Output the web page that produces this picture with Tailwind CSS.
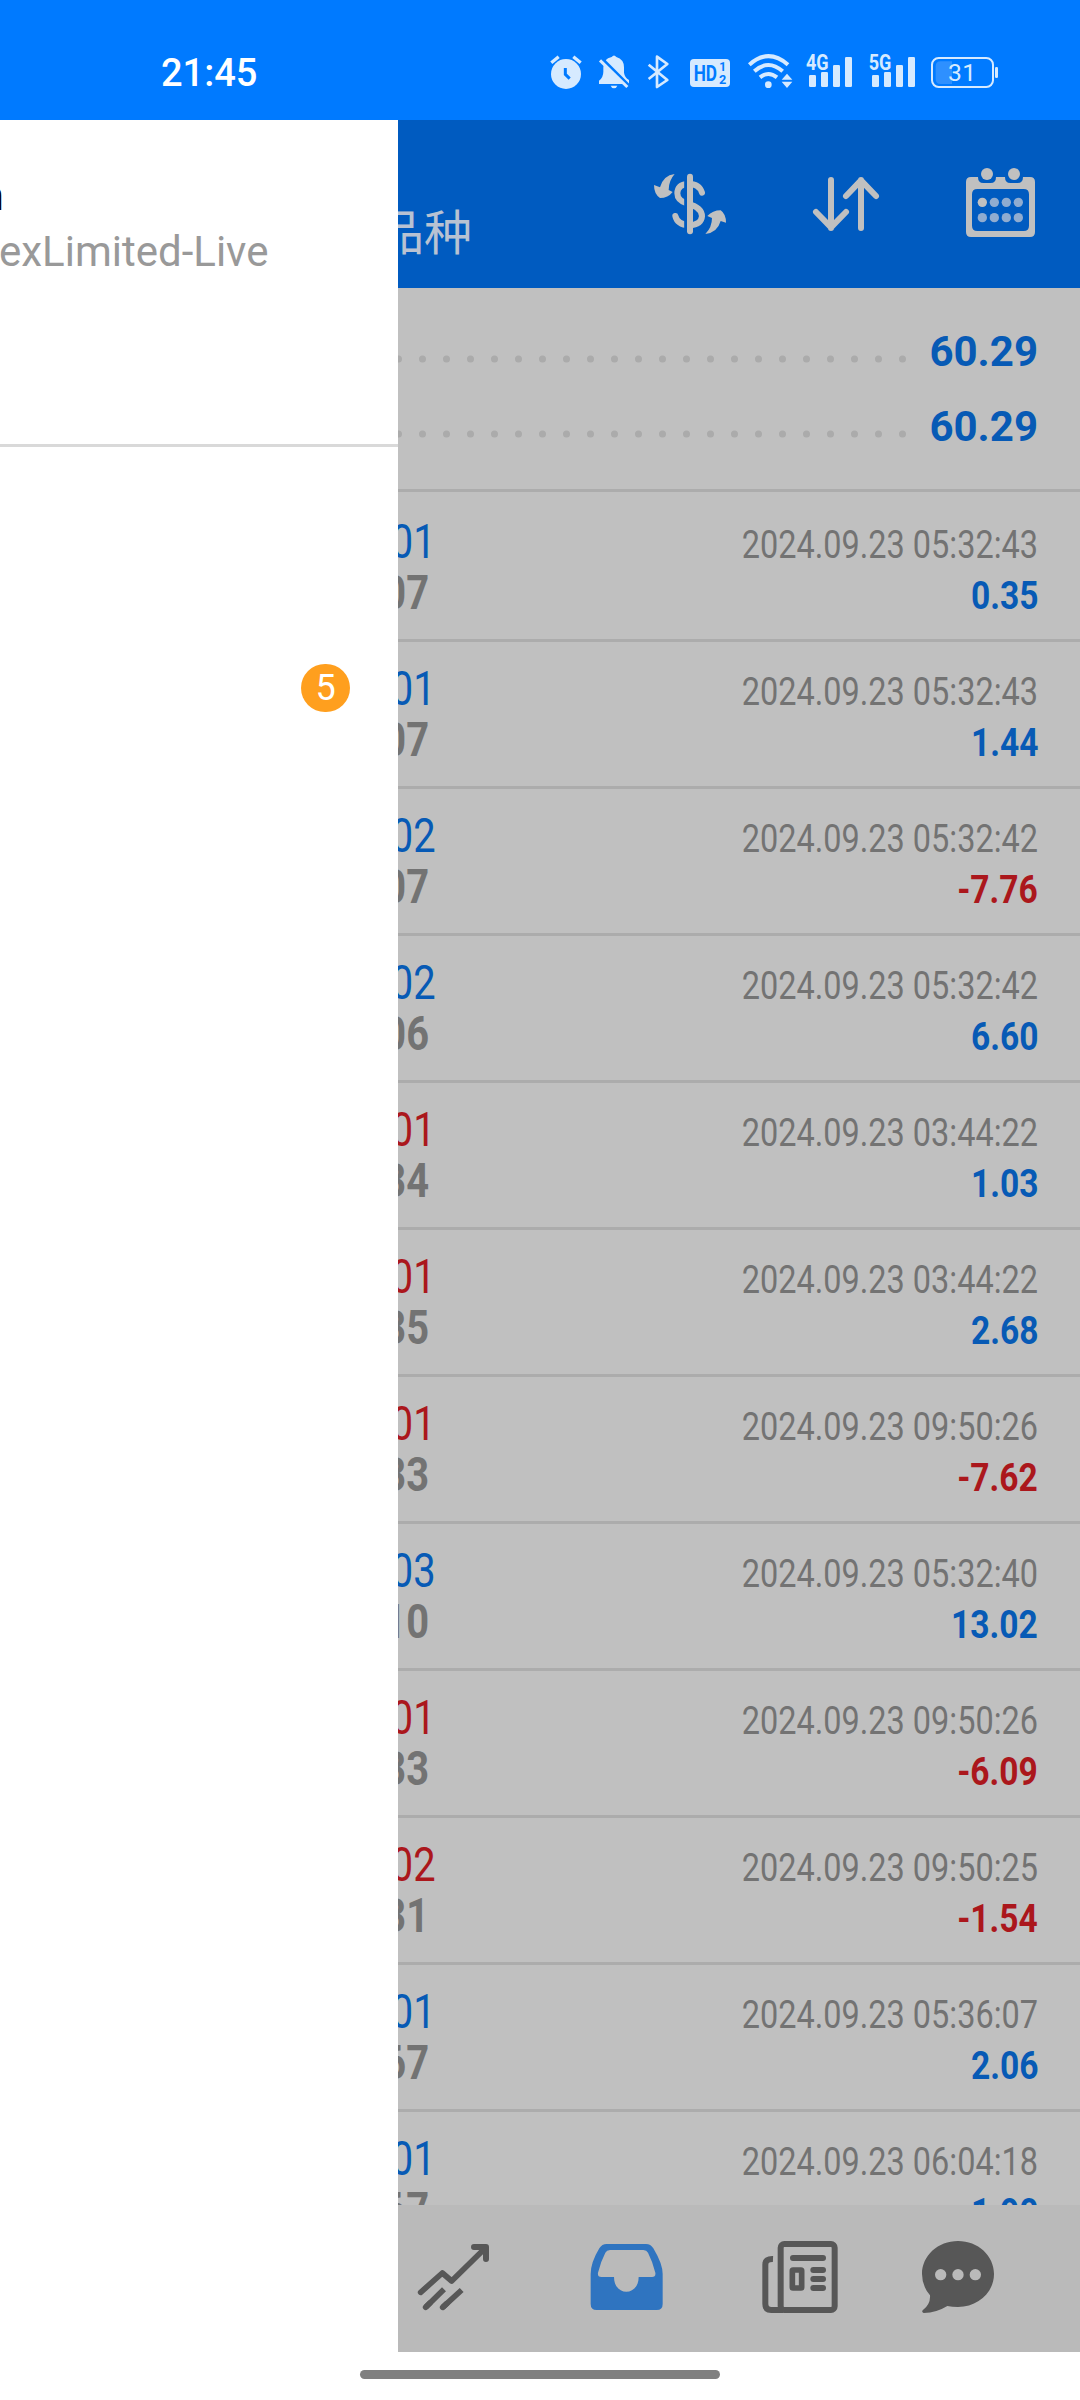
<!DOCTYPE html>
<html lang="zh">
<head>
    <meta charset="UTF-8">
    <meta name="viewport" content="width=device-width, initial-scale=1.0">
    <title>History</title>
    <script src="https://cdn.jsdelivr.net/npm/@tailwindcss/browser@4"></script>
</head>
<body class="w-[1080px] h-[2400px] overflow-hidden bg-white font-[Roboto,'Noto_Sans_CJK_SC',sans-serif]">

    <!-- Status bar -->
    <div class="h-[120px] bg-[#007aff] flex items-start pl-[161px] pr-[80px] text-white">
        <span class="mt-[48px] text-[38px] leading-[50px] font-medium">21:45</span>
        <div class="ml-auto mt-[50px] flex text-[#d6eaff]">
            <svg class="w-8 h-[45px]" viewBox="30 60 96 135" fill="currentColor">
                <circle cx="78" cy="132" r="45"/>
                <path d="M34 98 L56 80 M122 98 L100 80" stroke="currentColor" stroke-width="10"/>
                <path d="M76 114 V133 L89 146" fill="none" stroke="#007aff" stroke-width="9"/>
            </svg>
            <svg class="ml-4 w-8 h-[45px]" viewBox="174 60 96 135" fill="currentColor">
                <path d="M177 162 V152 Q190 142 190 125 V112 Q190 86 215 81 Q222 72 229 81 Q252 88 252 112 V128 Q254 142 267 150 V162 Z"/>
                <path d="M212 167 H232 Q229 175 222 175 Q215 175 212 167 Z"/>
                <path d="M185 85 L268 168" stroke="#007aff" stroke-width="9"/>
                <path d="M180 91 L262 171" stroke="currentColor" stroke-width="9"/>
            </svg>
            <svg class="ml-4 w-6 h-[45px]" viewBox="318 60 72 135" fill="none" stroke="currentColor" stroke-width="8" stroke-linejoin="round">
                <path d="M326 104 L382 150 L351 171 V80 L382 102 L326 147"/>
            </svg>
            <svg class="ml-[19px] w-[42px] h-[45px]" viewBox="447 60 126 135">
                <rect x="450" y="87" width="120" height="84" rx="12" fill="currentColor"/>
                <text x="461" y="152" font-family="Roboto" font-size="66" font-weight="700" textLength="70" lengthAdjust="spacingAndGlyphs" fill="#007aff">HD</text>
                <text x="538" y="124" font-family="Roboto" font-size="36" font-weight="700" fill="#007aff">1</text>
                <text x="537" y="161" font-family="Roboto" font-size="38" font-weight="700" fill="#007aff">2</text>
            </svg>
            <svg class="ml-4 w-[46px] h-[45px]" viewBox="621 60 138 135" fill="none" stroke="currentColor" stroke-width="12">
                <path d="M628 104 Q685 53 744 104"/>
                <path d="M643 124 Q685 86 728 124"/>
                <path d="M660 142 Q685 122 711 142"/>
                <circle cx="685" cy="164" r="10" fill="currentColor" stroke="none"/>
                <path d="M725 149 L741 131 L757 149 Z M725 155 L741 174 L757 155 Z" fill="currentColor" stroke="none"/>
            </svg>
            <svg class="ml-3 w-12 h-[45px]" viewBox="75 60 144 135" fill="currentColor">
                <text x="78" y="121" font-family="Roboto" font-size="64" font-weight="700" textLength="68" lengthAdjust="spacingAndGlyphs">4G</text>
                <rect x="87" y="135" width="21" height="36" rx="4"/>
                <rect x="123" y="126" width="21" height="45" rx="4"/>
                <rect x="159" y="105" width="21" height="66" rx="4"/>
                <rect x="195" y="81" width="21" height="90" rx="4"/>
            </svg>
            <svg class="ml-[15px] w-12 h-[45px]" viewBox="264 60 144 135" fill="currentColor">
                <text x="266" y="121" font-family="Roboto" font-size="64" font-weight="700" textLength="68" lengthAdjust="spacingAndGlyphs">5G</text>
                <rect x="276" y="135" width="21" height="36" rx="4"/>
                <rect x="312" y="126" width="21" height="45" rx="4"/>
                <rect x="348" y="105" width="21" height="66" rx="4"/>
                <rect x="384" y="81" width="21" height="90" rx="4"/>
            </svg>
            <svg class="ml-[14px] w-[70px] h-[45px]" viewBox="450 60 210 135" fill="currentColor">
                <rect x="456" y="84" width="183" height="87" rx="20" fill="none" stroke="currentColor" stroke-width="6"/>
                <path d="M482 94 H516 V162 H482 Q467 162 467 147 V109 Q467 94 482 94 Z" fill="#2e90ff"/>
                <rect x="645" y="111" width="9" height="33" rx="4"/>
                <text x="504" y="154" font-family="Roboto" font-size="74" textLength="84">31</text>
            </svg>
        </div>
    </div>

    <div class="flex h-[2232px]">
        <!-- Drawer -->
        <aside class="w-[398px] shrink-0 bg-white overflow-hidden">
            <div class="h-[327px] border-b-[3px] border-[#d9d9d9] pt-[50px]">
                <div class="flex justify-end w-[4px] text-[42px] leading-[52px] text-black">n</div>
                <div class="-ml-px mt-1 text-[42px] leading-[52px] text-[#999] whitespace-nowrap">exLimited-Live</div>
            </div>
            <div class="flex justify-end pr-[48px] pt-[217px]">
                <span class="w-[49px] h-12 rounded-full bg-[#ff9f1e] text-white text-[36px] leading-[48px] text-center">5</span>
            </div>
        </aside>

        <!-- Dimmed page -->
        <main class="w-[682px] flex flex-col bg-[#c0c0c0] overflow-hidden">
            <header class="h-[168px] shrink-0 bg-[#005bc0] flex items-start pr-[38px] text-[#c0c0c0]">
                <div class="w-[74px] mt-[75px] flex justify-end text-[48px] leading-[68px] font-normal text-[#b8c2d2] whitespace-nowrap font-['Noto_Sans_CJK_SC',sans-serif]">所有品种</div>
                <svg class="ml-auto mt-[45px] w-20 h-[75px]" viewBox="156 75 240 225" fill="none" stroke="currentColor" stroke-linecap="round">
                    <path d="M306 158 Q298 131 264 131 Q232 134 232 160 Q232 182 262 191 Q306 202 306 229 Q304 254 268 256 Q232 254 226 228" stroke-width="18"/>
                    <path d="M257 120 V268" stroke="#005bc0" stroke-width="9" stroke-linecap="butt"/>
                    <path d="M270 110 V274" stroke-width="18"/>
                    <path d="M224 102 Q190 106 180 142 L162 135 Q162 162 180 174 Q204 174 218 156 L206 150 Q206 122 224 102 Z" fill="currentColor" stroke="none"/>
                    <path d="M316 282 Q352 278 362 243 L378 248 Q378 222 362 211 Q338 211 322 228 L336 234 Q336 262 316 282 Z" fill="currentColor" stroke="none"/>
                </svg>
                <svg class="ml-[78px] mt-[45px] w-20 h-[75px]" viewBox="630 75 240 225" fill="none" stroke="currentColor" stroke-width="18" stroke-linecap="round" stroke-linejoin="round">
                    <path d="M693 120 V264 M648 216 L693 262 L738 216"/>
                    <path d="M783 264 V120 M738 168 L783 121 L828 168"/>
                </svg>
                <svg class="ml-[72px] mt-[45px] w-20 h-[75px]" viewBox="1086 75 240 225" fill="currentColor">
                    <path fill-rule="evenodd" d="M1113 111 H1134 Q1134 129 1150 129 H1172 Q1188 129 1188 111 H1215 Q1215 129 1231 129 H1253 Q1269 129 1269 111 H1290 Q1305 111 1305 126 V276 Q1305 291 1290 291 H1113 Q1098 291 1098 276 V126 Q1098 111 1113 111 Z M1132 147 Q1116 147 1116 163 V257 Q1116 273 1132 273 H1271 Q1287 273 1287 257 V163 Q1287 147 1271 147 Z"/>
                    <circle cx="1161" cy="102" r="18"/>
                    <circle cx="1242" cy="102" r="18"/>
                    <circle cx="1147" cy="187" r="14"/>
                    <g fill="#90acd0">
                        <circle cx="1183" cy="187" r="14"/>
                        <circle cx="1219" cy="187" r="14"/>
                        <circle cx="1255" cy="187" r="14"/>
                        <circle cx="1147" cy="233" r="14"/>
                        <circle cx="1183" cy="233" r="14"/>
                        <circle cx="1219" cy="233" r="14"/>
                        <circle cx="1255" cy="233" r="14"/>
                    </g>
                </svg>
            </header>

            <!-- Totals -->
            <section class="h-[204px] shrink-0 border-b-[3px] border-[#acacac] pt-[26px] pr-[42px] text-[42px] leading-[75px] font-bold text-[#075ab5]">
                <div class="flex h-[75px]">
                    <svg class="mt-[41px] w-[520px] h-2" viewBox="0 0 520 8"><path d="M504.500 4 H-10" stroke="#ababab" stroke-width="7" stroke-linecap="round" stroke-dasharray="0 24"/></svg>
                    <span class="ml-auto">60.29</span>
                </div>
                <div class="flex h-[75px]">
                    <svg class="mt-[41px] w-[520px] h-2" viewBox="0 0 520 8"><path d="M504.500 4 H-10" stroke="#ababab" stroke-width="7" stroke-linecap="round" stroke-dasharray="0 24"/></svg>
                    <span class="ml-auto">60.29</span>
                </div>
            </section>

            <!-- Deals -->
            <section id="deals" class="flex-1 min-h-0 overflow-hidden pt-[3px]"></section>

            <!-- Tabs -->
            <nav class="h-[147px] shrink-0 bg-[#bababa] flex items-start pt-[35px] pl-[17px] text-[#575757]">
                <svg class="w-20 h-[75px]" viewBox="105 480 240 225" fill="none" stroke="currentColor" stroke-width="17">
                    <path d="M122 637 L187 579 L215 603 L316 504" stroke-linecap="round" stroke-linejoin="round"/>
                    <path d="M282 501 H318 V537" stroke-width="18" stroke-linecap="round" stroke-linejoin="round"/>
                    <path d="M137 682 L192 628 M188 682 L245 630"/>
                    <path d="M137 682 L150 669 M188 682 L200 671" stroke-linecap="round"/>
                </svg>
                <svg class="ml-[92px] w-20 h-[75px]" viewBox="621 480 240 225" fill="#2f74c0">
                    <path fill-rule="evenodd" d="M680 492 H798 Q812 492 820 505 Q848 552 848 582 V672 Q848 690 830 690 H650 Q632 690 632 672 V582 Q632 548 658 505 Q666 492 680 492 Z M690 510 Q680 510 676 518 Q662 545 654 578 Q652 591 664 591 H702 C702 650 776 650 776 591 H816 Q828 591 826 578 Q818 545 804 518 Q800 510 790 510 Z"/>
                </svg>
                <svg class="ml-[93px] w-20 h-[75px]" viewBox="90 480 240 225" fill="none" stroke="currentColor" stroke-width="18">
                    <rect x="152" y="492" width="162" height="198" rx="11"/>
                    <path d="M129 537 Q106 536 106 554 V672 Q106 690 124 690 H160"/>
                    <path d="M189 534 H279 M250 570 H279 M250 597 H279 M250 624 H279" stroke-linecap="round"/>
                    <rect x="187" y="570" width="28" height="54" rx="2" stroke-width="17"/>
                </svg>
                <svg class="ml-[78px] w-20 h-[75px]" viewBox="564 480 240 225" fill="currentColor">
                    <path d="M684 483 C744 483 792 527 792 582 C792 637 744 681 684 681 Q666 681 652 678 Q620 698 581 699 Q574 697 578 691 Q602 672 600 646 Q576 618 576 582 C576 527 624 483 684 483 Z"/>
                    <g fill="#bababa">
                        <circle cx="632" cy="584" r="17"/>
                        <circle cx="684" cy="584" r="17"/>
                        <circle cx="736" cy="584" r="17"/>
                    </g>
                </svg>
            </nav>
        </main>
    </div>

    <!-- Home indicator -->
    <div class="mt-[18px] mx-auto w-[360px] h-[9px] rounded-full bg-[#808080]"></div>

    <script>
        const blue = 'text-[#075ab5]';
        const red = 'text-[#ab171c]';

        // side color, volume, price, time, profit
        const deals = [
            [blue, '0.01', '07', '2024.09.23 05:32:43', '0.35'],
            [blue, '0.01', '07', '2024.09.23 05:32:43', '1.44'],
            [blue, '0.02', '07', '2024.09.23 05:32:42', '-7.76'],
            [blue, '0.02', '06', '2024.09.23 05:32:42', '6.60'],
            [red, '0.01', '34', '2024.09.23 03:44:22', '1.03'],
            [red, '0.01', '35', '2024.09.23 03:44:22', '2.68'],
            [red, '0.01', '33', '2024.09.23 09:50:26', '-7.62'],
            [blue, '0.03', '10', '2024.09.23 05:32:40', '13.02'],
            [red, '0.01', '33', '2024.09.23 09:50:26', '-6.09'],
            [red, '0.02', '31', '2024.09.23 09:50:25', '-1.54'],
            [blue, '0.01', '67', '2024.09.23 05:36:07', '2.06'],
            [blue, '0.01', '67', '2024.09.23 06:04:18', '1.90'],
        ];

        document.getElementById('deals').innerHTML = deals.map(([side, volume, price, time, profit]) => `
            <div class="h-[147px] flex justify-between pr-[42px] border-b-[3px] border-[#acacac] whitespace-nowrap">
                <div class="pt-[21px] text-[48px] leading-[51px]">
                    <div class="w-[38px] flex justify-end ${side}"><span class="origin-right scale-x-[0.83]">${volume}</span></div>
                    <div class="w-[31px] flex justify-end font-bold text-[#737373]"><span class="origin-right scale-x-[0.83]">${price}</span></div>
                </div>
                <div class="pt-[25px] flex flex-col items-end text-[39px] leading-[51px]">
                    <span class="origin-right scale-x-[0.832] text-[#737373]">${time}</span>
                    <span class="origin-right scale-x-[0.86] font-bold ${profit.startsWith('-') ? red : blue}">${profit}</span>
                </div>
            </div>`).join('');
    </script>
</body>
</html>
